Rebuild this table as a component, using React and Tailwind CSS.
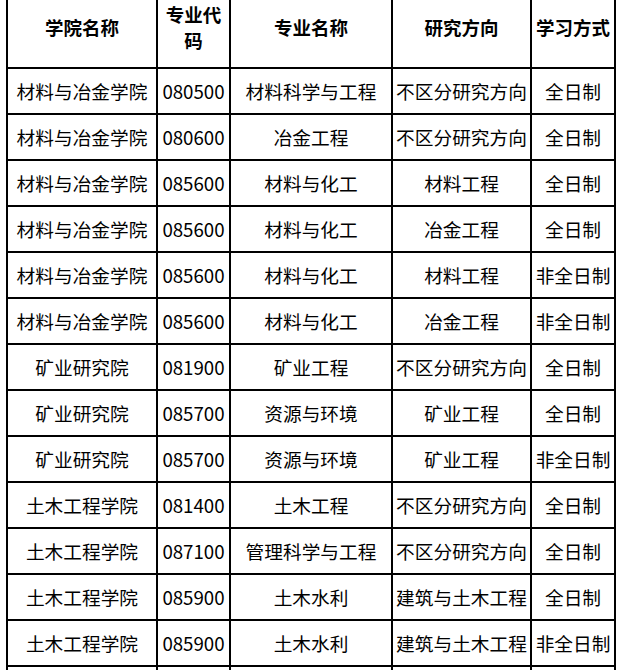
import React from 'react'

const rows = [
  ['材料与冶金学院', '080500', '材料科学与工程', '不区分研究方向', '全日制'],
  ['材料与冶金学院', '080600', '冶金工程', '不区分研究方向', '全日制'],
  ['材料与冶金学院', '085600', '材料与化工', '材料工程', '全日制'],
  ['材料与冶金学院', '085600', '材料与化工', '冶金工程', '全日制'],
  ['材料与冶金学院', '085600', '材料与化工', '材料工程', '非全日制'],
  ['材料与冶金学院', '085600', '材料与化工', '冶金工程', '非全日制'],
  ['矿业研究院', '081900', '矿业工程', '不区分研究方向', '全日制'],
  ['矿业研究院', '085700', '资源与环境', '矿业工程', '全日制'],
  ['矿业研究院', '085700', '资源与环境', '矿业工程', '非全日制'],
  ['土木工程学院', '081400', '土木工程', '不区分研究方向', '全日制'],
  ['土木工程学院', '087100', '管理科学与工程', '不区分研究方向', '全日制'],
  ['土木工程学院', '085900', '土木水利', '建筑与土木工程', '全日制'],
  ['土木工程学院', '085900', '土木水利', '建筑与土木工程', '非全日制'],
  ['', '', '', '', ''],
]

const headers = ['学院名称', '专业代码', '专业名称', '研究方向', '学习方式']

export default function App() {
  return (
    <div
      className="h-[670px] w-[621px] overflow-hidden bg-white pl-[6px] text-black"
      style={{ fontFamily: '"Noto Sans CJK SC", "Noto Sans", sans-serif' }}
    >
      <div className="grid w-[610px] grid-cols-[150px_73px_162px_139px_84px] border-l-2 border-black">
        {headers.map((h, i) => (
          <div
            key={h}
            className="flex h-[69px] items-center justify-center border-r-2 border-b-2 border-black px-1 pb-[13px] text-center text-[18.5px] font-bold leading-[26px]"
          >
            {i === 1 ? (
              <span>
                专业代
                <br />码
              </span>
            ) : (
              h
            )}
          </div>
        ))}
        {rows.map((row, r) =>
          row.map((cell, c) => (
            <div
              key={r + '-' + c}
              className="flex h-[46px] items-center justify-center whitespace-nowrap border-r-2 border-b-2 border-black text-[18.7px] leading-none"
            >
              {cell}
            </div>
          ))
        )}
      </div>
    </div>
  )
}
